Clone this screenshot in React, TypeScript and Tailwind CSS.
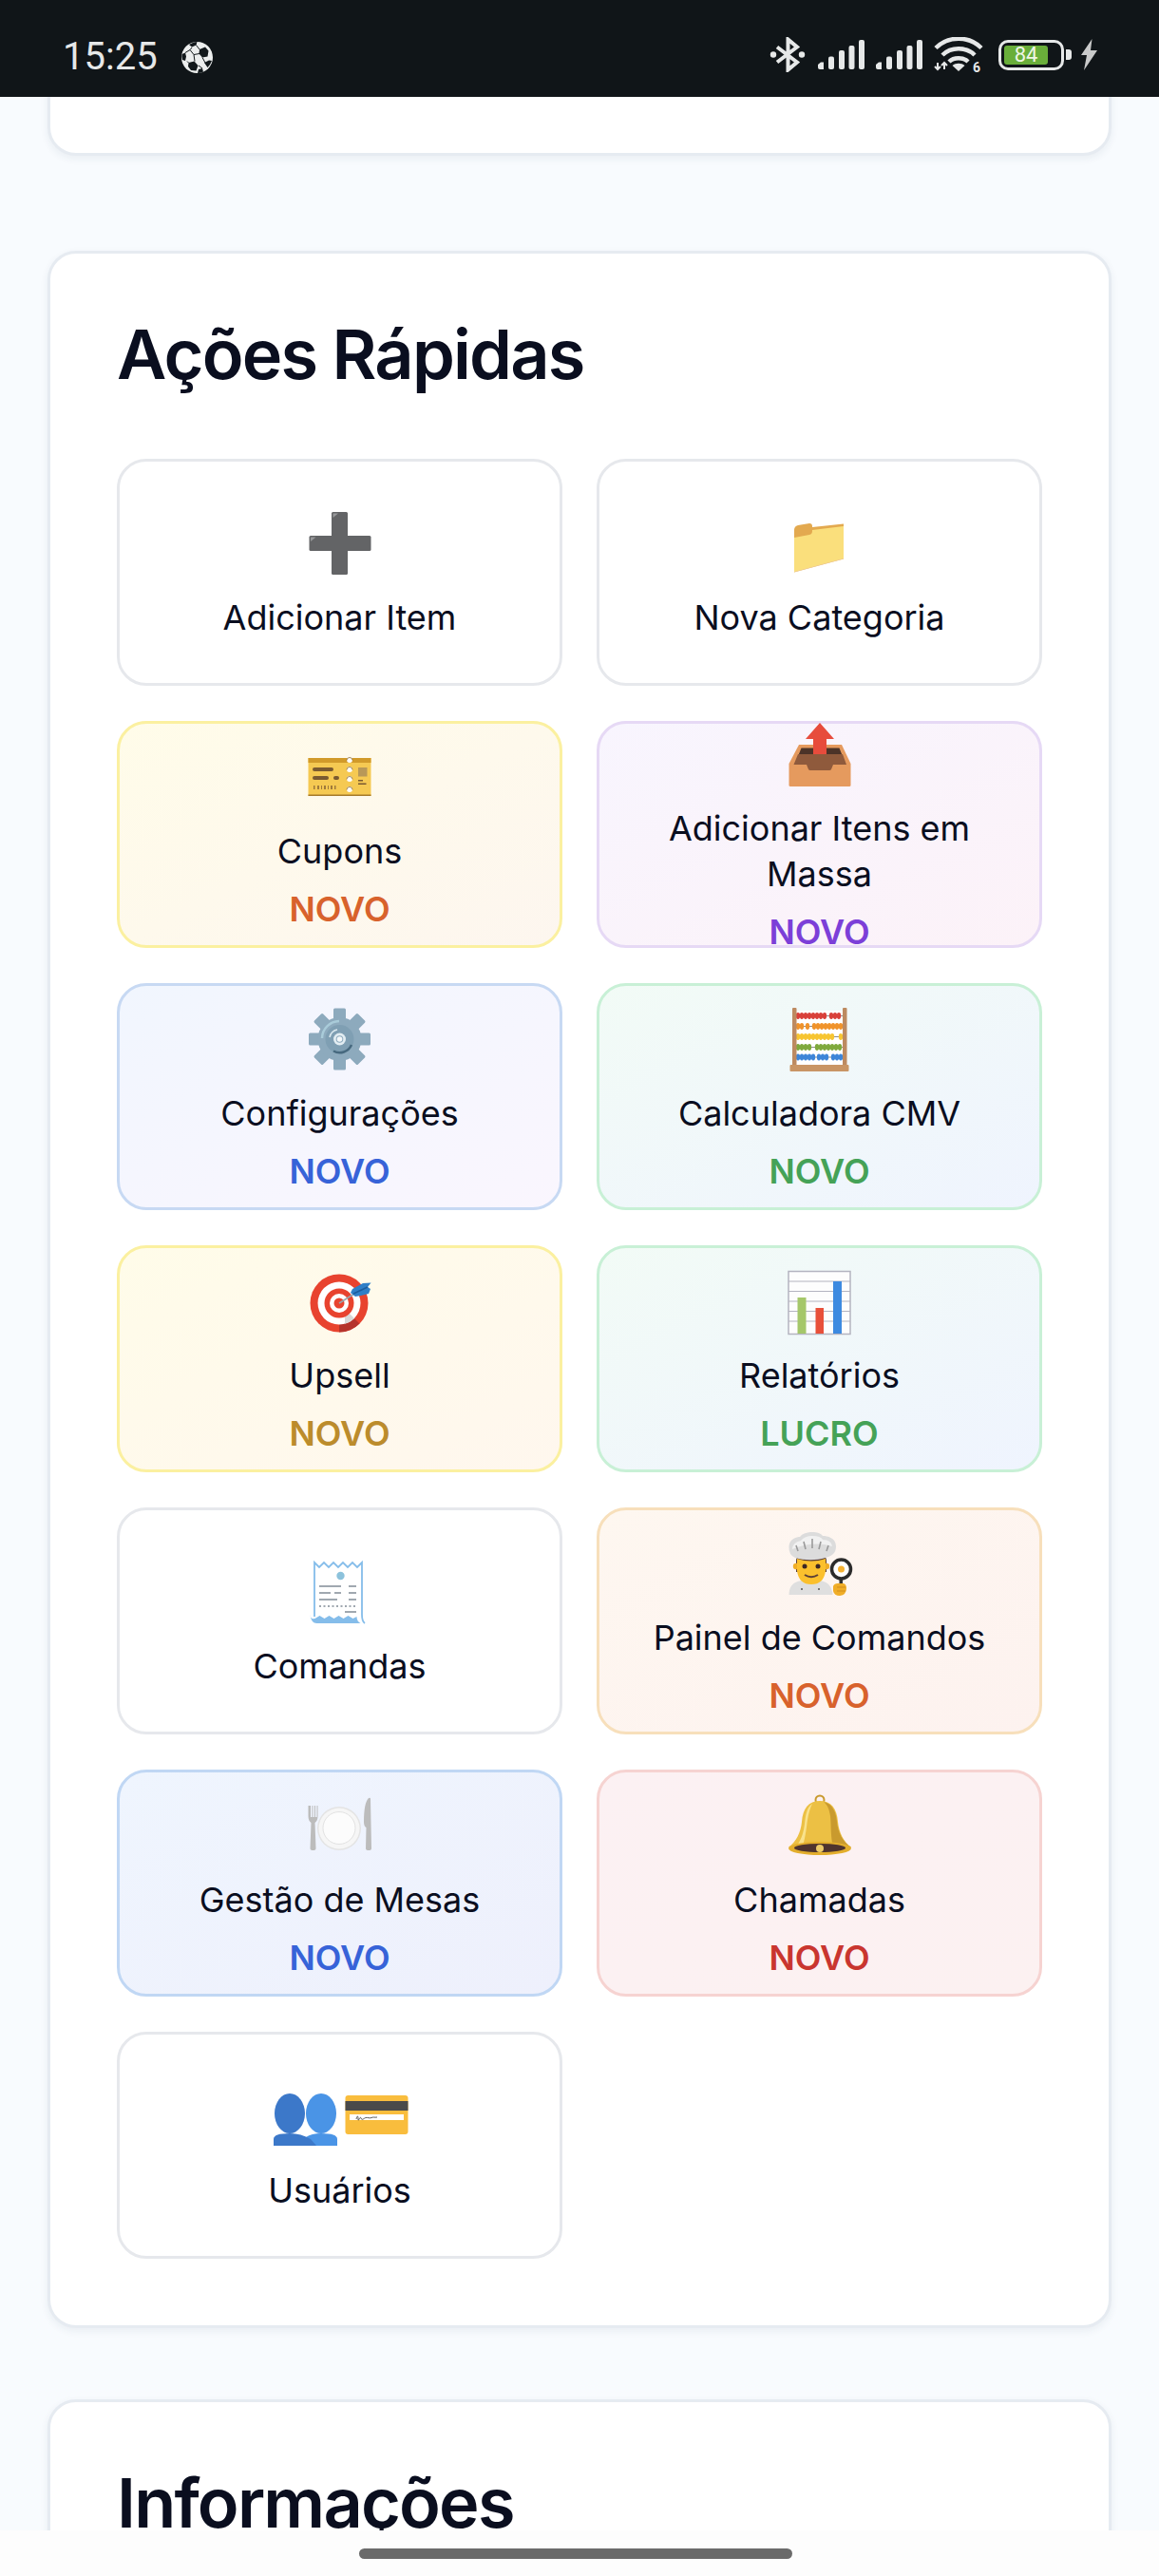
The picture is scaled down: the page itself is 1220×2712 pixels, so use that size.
import type { ReactNode } from "react";

//Status bar icons
function SoccerBall() {
  return (
    <svg width="33" height="33" viewBox="0 0 33 33">
      <circle cx="16.500" cy="16.500" r="16.500" fill="#eceeee" />
      <path d="M19 8l6-2.500 3.500 4-1 6-5.500 1-3.500-4zM7.500 22l6-1.500 4 4.500-2 5.500-5.500-.5-3-4zM.6 13l3.400-1.500 1 4-1 4.500-3-1Q0 16 .6 13zM24 22l5-2.500 3 .5q-1.500 4-4.500 7zM8 3l5-2.500q2-.5 3.500-.5l-1 3.500-4.500 2zM18 29l4-1 1 3.500q-3 1.500-6 1.500z" fill="#12181b" />
      <path d="M15.500 3.500l3.500 4.500M19 12.500l-6 1-4-5 2-2.500M9 8.500L4 11.500M13 13.500l1 7M22 16.500l3 5.500M18 25l4 3M6 20.500l1.500 1.500" stroke="#12181b" strokeWidth="1" fill="none" />
    </svg>
  );
}

function Bluetooth() {
  return (
    <svg width="38" height="37" viewBox="0 0 38 37" fill="none" stroke="#e6e8e8" strokeWidth="4">
      <path d="M8 10.500l21 16-9.500 8V2.500l9.500 8-21 16" />
      <circle cx="4" cy="18.500" r="3.200" fill="#e6e8e8" stroke="none" />
      <circle cx="34" cy="18.500" r="3.200" fill="#e6e8e8" stroke="none" />
    </svg>
  );
}

function Signal() {
  return (
    <svg width="49" height="31" viewBox="0 0 49 31" fill="#e6e8e8">
      <path d="M0 26l3-2.500h3V31H2q-2 0-2-2z" />
      <rect x="11" y="17.500" width="6" height="13.500" rx="2" />
      <rect x="22" y="11" width="6" height="20" rx="2" />
      <rect x="32.500" y="6" width="6" height="25" rx="2" />
      <rect x="43" y="0" width="6" height="31" rx="2" />
    </svg>
  );
}

function Wifi() {
  return (
    <svg width="52" height="38" viewBox="0 0 52 38" fill="none" stroke="#e6e8e8" strokeWidth="4.500">
      <path d="M2 11.500c13-13 35-13 48 0" />
      <path d="M9 19c9-9 25-9 34 0" />
      <path d="M16 26c5-5 15-5 20 0" />
      <path d="M26 36l-6.500-6c3.500-3 9.500-3 13 0z" fill="#e6e8e8" stroke="none" />
      <path d="M4 27v6M1 31l3 3 3-3M11 34v-6M8 30l3-3 3 3" strokeWidth="2" />
      <text x="41" y="37" fontFamily="Roboto, sans-serif" fontSize="14" fontWeight="700" fill="#e6e8e8" stroke="none">
        6
      </text>
    </svg>
  );
}

function Bolt() {
  return (
    <svg width="18" height="33" viewBox="0 0 18 33" fill="#c9caca">
      <path d="M12.500 0L1 17h6L4 33 18 12h-7z" />
    </svg>
  );
}

function Battery() {
  return (
    <div className="flex items-center gap-[2px]">
      <div className="flex h-[32px] w-[69px] rounded-[10px] border-[3px] border-[#e6e8e8] p-[3px]">
        <div className="flex w-[46px] items-center justify-center rounded-[3px] bg-[#69ae3a] font-['Roboto',sans-serif] text-[22px] leading-none text-[#eef6e6]">
          84
        </div>
      </div>
      <div className="h-[11px] w-[6px] rounded-r-[3px] bg-[#e6e8e8]" />
    </div>
  );
}

function StatusBar() {
  return (
    <header className="flex h-[102px] shrink-0 items-center justify-between bg-[#101518] pl-[66px] pr-[65px] pt-[18px]">
      <div className="flex items-center gap-[25px]">
        <span className="font-['Roboto',sans-serif] text-[40px] leading-none text-[#e6e8e8]">15:25</span>
        <SoccerBall />
      </div>
      <div className="flex items-center pb-[5px]">
        <Bluetooth />
        <div className="ml-[13px]">
          <Signal />
        </div>
        <div className="ml-[12px]">
          <Signal />
        </div>
        <div className="ml-[12px]">
          <Wifi />
        </div>
        <div className="ml-[16px]">
          <Battery />
        </div>
        <div className="ml-[9px]">
          <Bolt />
        </div>
      </div>
    </header>
  );
}

//Tile icons, all on a 72 box like the emoji they stand for
function Emoji({ children }: { children: ReactNode }) {
  return (
    <svg width="72" height="72" viewBox="0 0 72 72">
      {children}
    </svg>
  );
}

function PlusIcon() {
  return (
    <Emoji>
      <rect x="27" y="3" width="17" height="66" rx="1.500" fill="#636466" />
      <rect x="3.500" y="28" width="65" height="16" rx="1.500" fill="#636466" />
      <path d="M28.500 9V5q0-.5.500-.5h5z" fill="#97989a" />
      <path d="M5 34v-4q0-.5.500-.5h5z" fill="#97989a" />
    </Emoji>
  );
}

function FolderIcon() {
  return (
    <Emoji>
      <path d="M9 22q0-4 4-5l12-2q3 0 3 3v1l33-3.500V30L9 40z" fill="#e3a94f" />
      <path d="M9 30l16-3q3-.5 3-4v-1l33-4v34L9 66z" fill="#fadf7c" />
      <path d="M9 66l52-14v.500L9 66.500z" fill="#e3a94f" />
    </Emoji>
  );
}

function TicketIcon() {
  return (
    <Emoji>
      <rect x="2.500" y="16" width="66" height="40" fill="#f5c952" />
      <rect x="2.500" y="16" width="66" height="5" fill="#d19a2a" />
      <rect x="2.500" y="54.500" width="66" height="1.500" fill="#a57a2a" />
      <rect x="7" y="26" width="22" height="4" rx="2" fill="#7a5a30" />
      <rect x="7" y="35" width="17" height="4" rx="2" fill="#7a5a30" />
      <rect x="29" y="35" width="6" height="4" rx="2" fill="#7a5a30" />
      <path d="M8 45h1.500v4H8zM12 45h2v4h-2zM16 45h1v4h-1zM19 45h2v4h-2zM23 45h1v4h-1zM26 45h2v4h-2zM30 45h1.500v4H30z" fill="#a07a3a" />
      <rect x="55" y="26" width="9.500" height="9.500" fill="#b89858" />
      <rect x="55" y="39" width="5" height="1.500" fill="#7a5a30" />
      <rect x="55" y="42.500" width="8.500" height="1.500" fill="#7a5a30" />
      <circle cx="46" cy="18" r="3" fill="#fff" />
      <circle cx="46" cy="28" r="3" fill="#fff" />
      <circle cx="46" cy="38" r="3" fill="#fff" />
      <circle cx="46" cy="49" r="3" fill="#fff" />
      <path d="M43 18.500a3 3 0 0 1 6 0M43 28.500a3 3 0 0 1 6 0M43 38.500a3 3 0 0 1 6 0M43 49.500a3 3 0 0 1 6 0" fill="none" stroke="#8a6a30" strokeWidth=".800" />
    </Emoji>
  );
}

function InboxIcon() {
  return (
    <Emoji>
      <path d="M14 26h45l9.500 20v22.500q0 1.500-1.500 1.500H5q-1.500 0-1.500-1.500V46z" fill="#e59a5e" />
      <path d="M16.500 29.500h40L63 46H10z" fill="#4c3328" />
      <path d="M13 36h47l4 11H50l-2 5q-.5 1-2 1H26q-1.500 0-2-1l-2-5H8.500z" fill="#8f5a3c" />
      <path d="M29 36V20h-8L36 3l15 17h-8v16z" fill="#e74c3c" />
    </Emoji>
  );
}

function GearIcon() {
  const teeth = [0, 45, 90, 135];
  return (
    <Emoji>
      {teeth.map((angle) => (
        <rect
          key={angle}
          x="29"
          y="3.500"
          width="13"
          height="65"
          rx="1.500"
          fill="#8daabd"
          transform={`rotate(${angle} 35.500 36)`}
        />
      ))}
      <circle cx="35.500" cy="36" r="23" fill="#8daabd" />
      <circle cx="35.500" cy="36" r="15" fill="#7f9fb3" />
      <path d="M17 35a18.500 18.500 0 0 1 18-18" fill="none" stroke="#a9cbd9" strokeWidth="2.500" />
      <path d="M25 34a10.500 10.500 0 0 1 8-8" fill="none" stroke="#dbe9ef" strokeWidth="1.500" />
      <path d="M48 42a13.500 13.500 0 0 1-19 6.500" fill="none" stroke="#47697f" strokeWidth="2.500" />
      <circle cx="35.500" cy="36" r="6.500" fill="#e2edf2" />
      <circle cx="35.500" cy="36" r="3.800" fill="#8daabd" />
      <circle cx="35.500" cy="36" r="2.800" fill="#f4f8fa" />
    </Emoji>
  );
}

const abacusRows = [
  { y: 11.5, color: "#d9403a", beads: [13, 17, 21, 25, 29, 33, 37, 41, 48, 52, 56] },
  { y: 22.5, color: "#f0932b", beads: [13, 17, 23, 30, 34, 38, 42, 46, 50, 54, 58] },
  { y: 33.5, color: "#f7c531", beads: [13, 17, 21, 25, 29, 33, 37, 41, 45, 49, 58] },
  { y: 44.5, color: "#7fa93c", beads: [13, 17, 21, 25, 33, 37, 41, 45, 49, 53, 57] },
  { y: 55, color: "#3d85d8", beads: [13, 17, 21, 25, 29, 35, 39, 43, 50, 54, 58] },
];

function AbacusIcon() {
  return (
    <Emoji>
      <rect x="9" y="6" width="54" height="58" fill="#fff" />
      {abacusRows.map((row) => (
        <g key={row.y}>
          <rect x="10" y={row.y - 0.5} width="50" height="1" fill="#8a8a8a" />
          {row.beads.map((x) => (
            <ellipse key={x} cx={x} cy={row.y} rx="2.200" ry="3.400" fill={row.color} />
          ))}
        </g>
      ))}
      <rect x="7" y="3" width="4.500" height="62" rx="1" fill="#bd8a60" />
      <rect x="60" y="3" width="4.500" height="62" rx="1" fill="#bd8a60" />
      <rect x="4.500" y="63" width="62" height="7" rx="1" fill="#c99565" />
    </Emoji>
  );
}

function TargetIcon() {
  return (
    <Emoji>
      <circle cx="35" cy="38" r="30.500" fill="#e8432f" />
      <path d="M56.500 59.500A30.500 30.500 0 0 1 35 68.500V60a22 22 0 0 0 15.500-6.500z" fill="#b5332c" />
      <circle cx="35" cy="38" r="22.500" fill="#fff" />
      <path d="M51 54a22.500 22.500 0 0 1-10 5.700V52a15 15 0 0 0 4-4z" fill="#d8d8d8" />
      <circle cx="35" cy="38" r="15.500" fill="#e8432f" />
      <circle cx="35" cy="38" r="10" fill="#fff" />
      <circle cx="35" cy="38" r="5.500" fill="#e8432f" />
      <path d="M35 38l16-10" stroke="#9aa5ad" strokeWidth="1.600" />
      <path d="M49 23l11-6 8.500-.5L65 21l3 2-2 5-8 2-6 1-5-4z" fill="#2f7fc7" />
      <path d="M50 28l15-7" stroke="#1c5c9c" strokeWidth="1.500" />
    </Emoji>
  );
}

function ChartIcon() {
  const lines = [14.5, 25, 35.5, 46, 56.5];
  return (
    <Emoji>
      <rect x="3" y="4.500" width="65" height="66" fill="#fdfdfd" stroke="#b4b4c0" strokeWidth="1.500" />
      {lines.map((y) => (
        <rect key={y} x="3" y={y} width="65" height="1" fill="#b4b4c0" />
      ))}
      <rect x="12.500" y="32" width="9" height="38" fill="#a5c76a" />
      <rect x="31.500" y="43" width="8.500" height="27" fill="#e8503a" />
      <rect x="50" y="15" width="9" height="55" fill="#3d8ae0" />
    </Emoji>
  );
}

function ReceiptIcon() {
  return (
    <Emoji>
      <path d="M9 4l5 5 5-5 5 5 5-5 5 5 5-5 5 5 5-5 5 5 5-4v55q0 8 3 10H13q-4-1-4-6z" fill="#fff" />
      <path d="M9 62V5l5 5 5-5 5 5 5-5 5 5 5-5 5 5 5-5 5 5 5-5v55q0 7 3 9" fill="none" stroke="#85bdea" strokeWidth="1.800" />
      <path d="M4.500 60q1 9 7 9h46q-4-2-4-7l-4 2-5-3-5 3-5-3-5 3-5-3-5 3-5-3-5 3q-5 1-5-4z" fill="#85bdea" />
      <circle cx="36.500" cy="19" r="4.200" fill="#8cc2dc" />
      <path d="M14 30h23M45 30h8M14 37h12M30 37h7M45 37h8M14 44h19M45 44h8M41 57h12" stroke="#a0a8b0" strokeWidth="1.800" fill="none" />
      <path d="M14 51h39" stroke="#a0a8b0" strokeWidth="1.800" strokeDasharray="2 2.500" fill="none" />
    </Emoji>
  );
}

function ChefIcon() {
  return (
    <Emoji>
      <path d="M3.500 69q0-13 13-15h20q12 2 13 15z" fill="#dfdfdf" />
      <circle cx="17" cy="63" r="1" fill="#555" />
      <circle cx="35" cy="63" r="1" fill="#555" />
      <path d="M11 33q0-8 16-8t16 8v12H11z" fill="#5d4037" />
      <circle cx="11" cy="39" r="3.200" fill="#f0ad27" />
      <circle cx="43" cy="39" r="3.200" fill="#f0ad27" />
      <path d="M12 31q15 5 30 0v13q-2 14-15 14T12 44z" fill="#fbc02d" />
      <circle cx="20" cy="39" r="2.500" fill="#3e2723" />
      <circle cx="34" cy="39" r="2.500" fill="#3e2723" />
      <path d="M20 48q7 4.500 14 0" fill="none" stroke="#5d4037" strokeWidth="2" />
      <path d="M10 30Q3 27 3.500 18C4 10 12 8 15 8c4-6 20-7 24-1 5 0 14 2 14 11 0 8-5 10-11 12-10 3-22 3-32 0z" fill="#dcdcdc" />
      <path d="M7 21q0-7 9-9 4-5 12-5 9 0 11 4 9 0 10 7-20-6-42 3z" fill="#f1f1f1" />
      <path d="M19 13l2 8M28 10v10M37 13l-2 8M11 17l2 6M45 17l-2 6" stroke="#9a9a9a" strokeWidth="1.600" fill="none" />
      <rect x="56.500" y="50" width="3.500" height="10" fill="#333" />
      <circle cx="58.500" cy="42" r="10" fill="#fff" stroke="#2b2b2b" strokeWidth="3.500" />
      <circle cx="58.500" cy="42" r="3.500" fill="#f5b233" />
      <path d="M50 60q1-3 5-3h6q3 1 3 5 0 7-7 8-6 0-7-5z" fill="#f0ad27" />
      <path d="M54 61h9M54 65h9" stroke="#d18d1c" strokeWidth="1" />
    </Emoji>
  );
}

function PlateIcon() {
  return (
    <Emoji>
      <circle cx="35" cy="39" r="23" fill="#e4e4e4" />
      <circle cx="35" cy="39" r="21.500" fill="#f6f6f6" />
      <circle cx="35" cy="38.500" r="17" fill="#fcfcfc" stroke="#e2e2e2" strokeWidth="1" />
      <path d="M2.500 15v11q0 5 3 7L4.500 60q0 2 3 2t3-2l-1-27q3-2 3-7V15h-1v12H10V15H9v12H7.500V15h-1v12H5V15z" fill="#bcbcbc" />
      <path d="M66 7q-5 5-5 25 0 5 2.500 6L63 60q0 2 3 2t3-2l-1-52q0-2-2-1z" fill="#bcbcbc" />
    </Emoji>
  );
}

function BellIcon() {
  return (
    <Emoji>
      <circle cx="36" cy="9" r="4.500" fill="none" stroke="#c99a2e" strokeWidth="2" />
      <path d="M36 10c-12 0-18 8-19 22-1 11-6 21-14 27l66 0c-8-6-13-16-14-27-1-14-7-22-19-22z" fill="#ecc044" />
      <path d="M40 11c9 2 13 10 14 21 1 11 6 21 15 27H50c-3-12-2-26-3-33-1-7-3-12-7-15z" fill="#c99a2e" />
      <path d="M28 13c-6 4-7 12-8 21-1 8-3 16-8 23h6c3-9 4-20 5-27 1-7 3-13 5-17z" fill="#f9e28c" />
      <ellipse cx="36" cy="60" rx="33" ry="7" fill="#e3ae2c" />
      <ellipse cx="36" cy="59.500" rx="27" ry="4.500" fill="#4e342e" />
      <circle cx="36" cy="60" r="4" fill="#eccb68" />
    </Emoji>
  );
}

function BustsIcon() {
  return (
    <Emoji>
      <ellipse cx="52" cy="33" rx="16" ry="21" fill="#4a94e6" />
      <path d="M36 58q6-4 16-4 17 0 17 6v7H36z" fill="#4a94e6" />
      <ellipse cx="19" cy="33" rx="16" ry="21" fill="#3c78c9" />
      <path d="M2 60q0-6 17-6 12 0 22 6l6 7H2z" fill="#3c78c9" />
    </Emoji>
  );
}

function CardIcon() {
  return (
    <Emoji>
      <rect x="5.500" y="14" width="66" height="41" rx="3" fill="#f9bd3d" />
      <rect x="5.500" y="20" width="66" height="10" fill="#4a4a4a" />
      <rect x="10" y="34" width="57" height="6" fill="#fff" />
      <path d="M17 39c1-4 2-4 2 0s2-4 3-1 3 0 5-.500 4 1 6 0 3 0 6-.500" fill="none" stroke="#333" strokeWidth=".800" />
    </Emoji>
  );
}

function Tile({
  icon,
  label,
  badge,
  badgeColor,
  tone = "border-[#e6e8ec] bg-white",
}: {
  icon: ReactNode;
  label: ReactNode;
  badge?: string;
  badgeColor?: string;
  tone?: string;
}) {
  return (
    <div
      className={`flex h-[239px] flex-col items-center justify-center rounded-[31px] border-[3px] px-[30px] pb-[2px] text-center ${tone}`}
    >
      <div className="flex h-[84px] shrink-0 items-center justify-center">{icon}</div>
      <div className="mt-[12px] text-[36px] font-[430] leading-[48px] text-[#0a0e1f]">{label}</div>
      {badge && (
        <div className={`mt-[15px] h-[44px] shrink-0 text-[36px] font-semibold leading-[44px] ${badgeColor}`}>{badge}</div>
      )}
    </div>
  );
}

export default function App() {
  return (
    <div className="flex h-[2712px] w-[1220px] flex-col overflow-hidden bg-[#f8fbfe] font-['Inter',sans-serif]">
      <StatusBar />

      <main className="min-h-0 flex-1 overflow-hidden px-[50px]">
        <div className="-mt-[40px] mb-[100px] h-[102px] rounded-[30px] border-[3px] border-[#e6ebf1] bg-white shadow-[0_3px_8px_rgba(30,50,80,0.07)]" />

        <section className="mb-[75px] rounded-[30px] border-[3px] border-[#e6ebf1] bg-white px-[70px] pb-[70px] pt-[70px] shadow-[0_3px_8px_rgba(30,50,80,0.07)]">
          <h2 className="mb-[74px] text-[72px] font-semibold leading-[72px] tracking-tight text-[#0a0e1f]">Ações Rápidas</h2>
          <div className="grid grid-cols-2 gap-x-[36px] gap-y-[37px]">
            <Tile icon={<PlusIcon />} label="Adicionar Item" />
            <Tile icon={<FolderIcon />} label="Nova Categoria" />
            <Tile
              icon={<TicketIcon />}
              label="Cupons"
              badge="NOVO"
              badgeColor="text-[#d8622c]"
              tone="border-[#fbf0a0] bg-linear-to-br from-[#fffce9] to-[#fdf6ef]"
            />
            <Tile
              icon={<InboxIcon />}
              label="Adicionar Itens em Massa"
              badge="NOVO"
              badgeColor="text-[#7c3fd8]"
              tone="border-[#e6d9f5] bg-linear-to-br from-[#f8f5fe] to-[#fcf2f8]"
            />
            <Tile
              icon={<GearIcon />}
              label="Configurações"
              badge="NOVO"
              badgeColor="text-[#3763d8]"
              tone="border-[#c7d9f3] bg-linear-to-br from-[#f1f6fe] to-[#faf6fe]"
            />
            <Tile
              icon={<AbacusIcon />}
              label="Calculadora CMV"
              badge="NOVO"
              badgeColor="text-[#45a257]"
              tone="border-[#c8f0d6] bg-linear-to-br from-[#f2fbf6] to-[#eff4fe]"
            />
            <Tile
              icon={<TargetIcon />}
              label="Upsell"
              badge="NOVO"
              badgeColor="text-[#bc8c2c]"
              tone="border-[#fbf0a0] bg-linear-to-br from-[#fffce9] to-[#fff7ee]"
            />
            <Tile
              icon={<ChartIcon />}
              label="Relatórios"
              badge="LUCRO"
              badgeColor="text-[#45a257]"
              tone="border-[#c8f0d6] bg-linear-to-br from-[#f2fbf6] to-[#eff4fe]"
            />
            <Tile icon={<ReceiptIcon />} label="Comandas" />
            <Tile
              icon={<ChefIcon />}
              label="Painel de Comandos"
              badge="NOVO"
              badgeColor="text-[#d8622c]"
              tone="border-[#f7dfbb] bg-linear-to-br from-[#fef7f0] to-[#fdf2ef]"
            />
            <Tile
              icon={<PlateIcon />}
              label="Gestão de Mesas"
              badge="NOVO"
              badgeColor="text-[#3763d8]"
              tone="border-[#c0d7f4] bg-linear-to-br from-[#eff5fe] to-[#eef0fc]"
            />
            <Tile
              icon={<BellIcon />}
              label="Chamadas"
              badge="NOVO"
              badgeColor="text-[#c9362f]"
              tone="border-[#f6d3d1] bg-linear-to-br from-[#fcf1f3] to-[#fcf1f1]"
            />
            <Tile
              icon={
                <div className="flex">
                  <BustsIcon />
                  <CardIcon />
                </div>
              }
              label="Usuários"
            />
          </div>
        </section>

        <section className="h-[300px] rounded-[30px] border-[3px] border-[#e6ebf1] bg-white px-[70px] pt-[70px] shadow-[0_3px_8px_rgba(30,50,80,0.07)]">
          <h2 className="text-[72px] font-semibold leading-[72px] tracking-tight text-[#0a0e1f]">Informações</h2>
        </section>
      </main>

      <footer className="h-[48px] shrink-0 bg-[#fdfdfd] pl-[378px] pt-[19px]">
        <div className="h-[11px] w-[456px] rounded-full bg-[#6b6b6b]" />
      </footer>
    </div>
  );
}
